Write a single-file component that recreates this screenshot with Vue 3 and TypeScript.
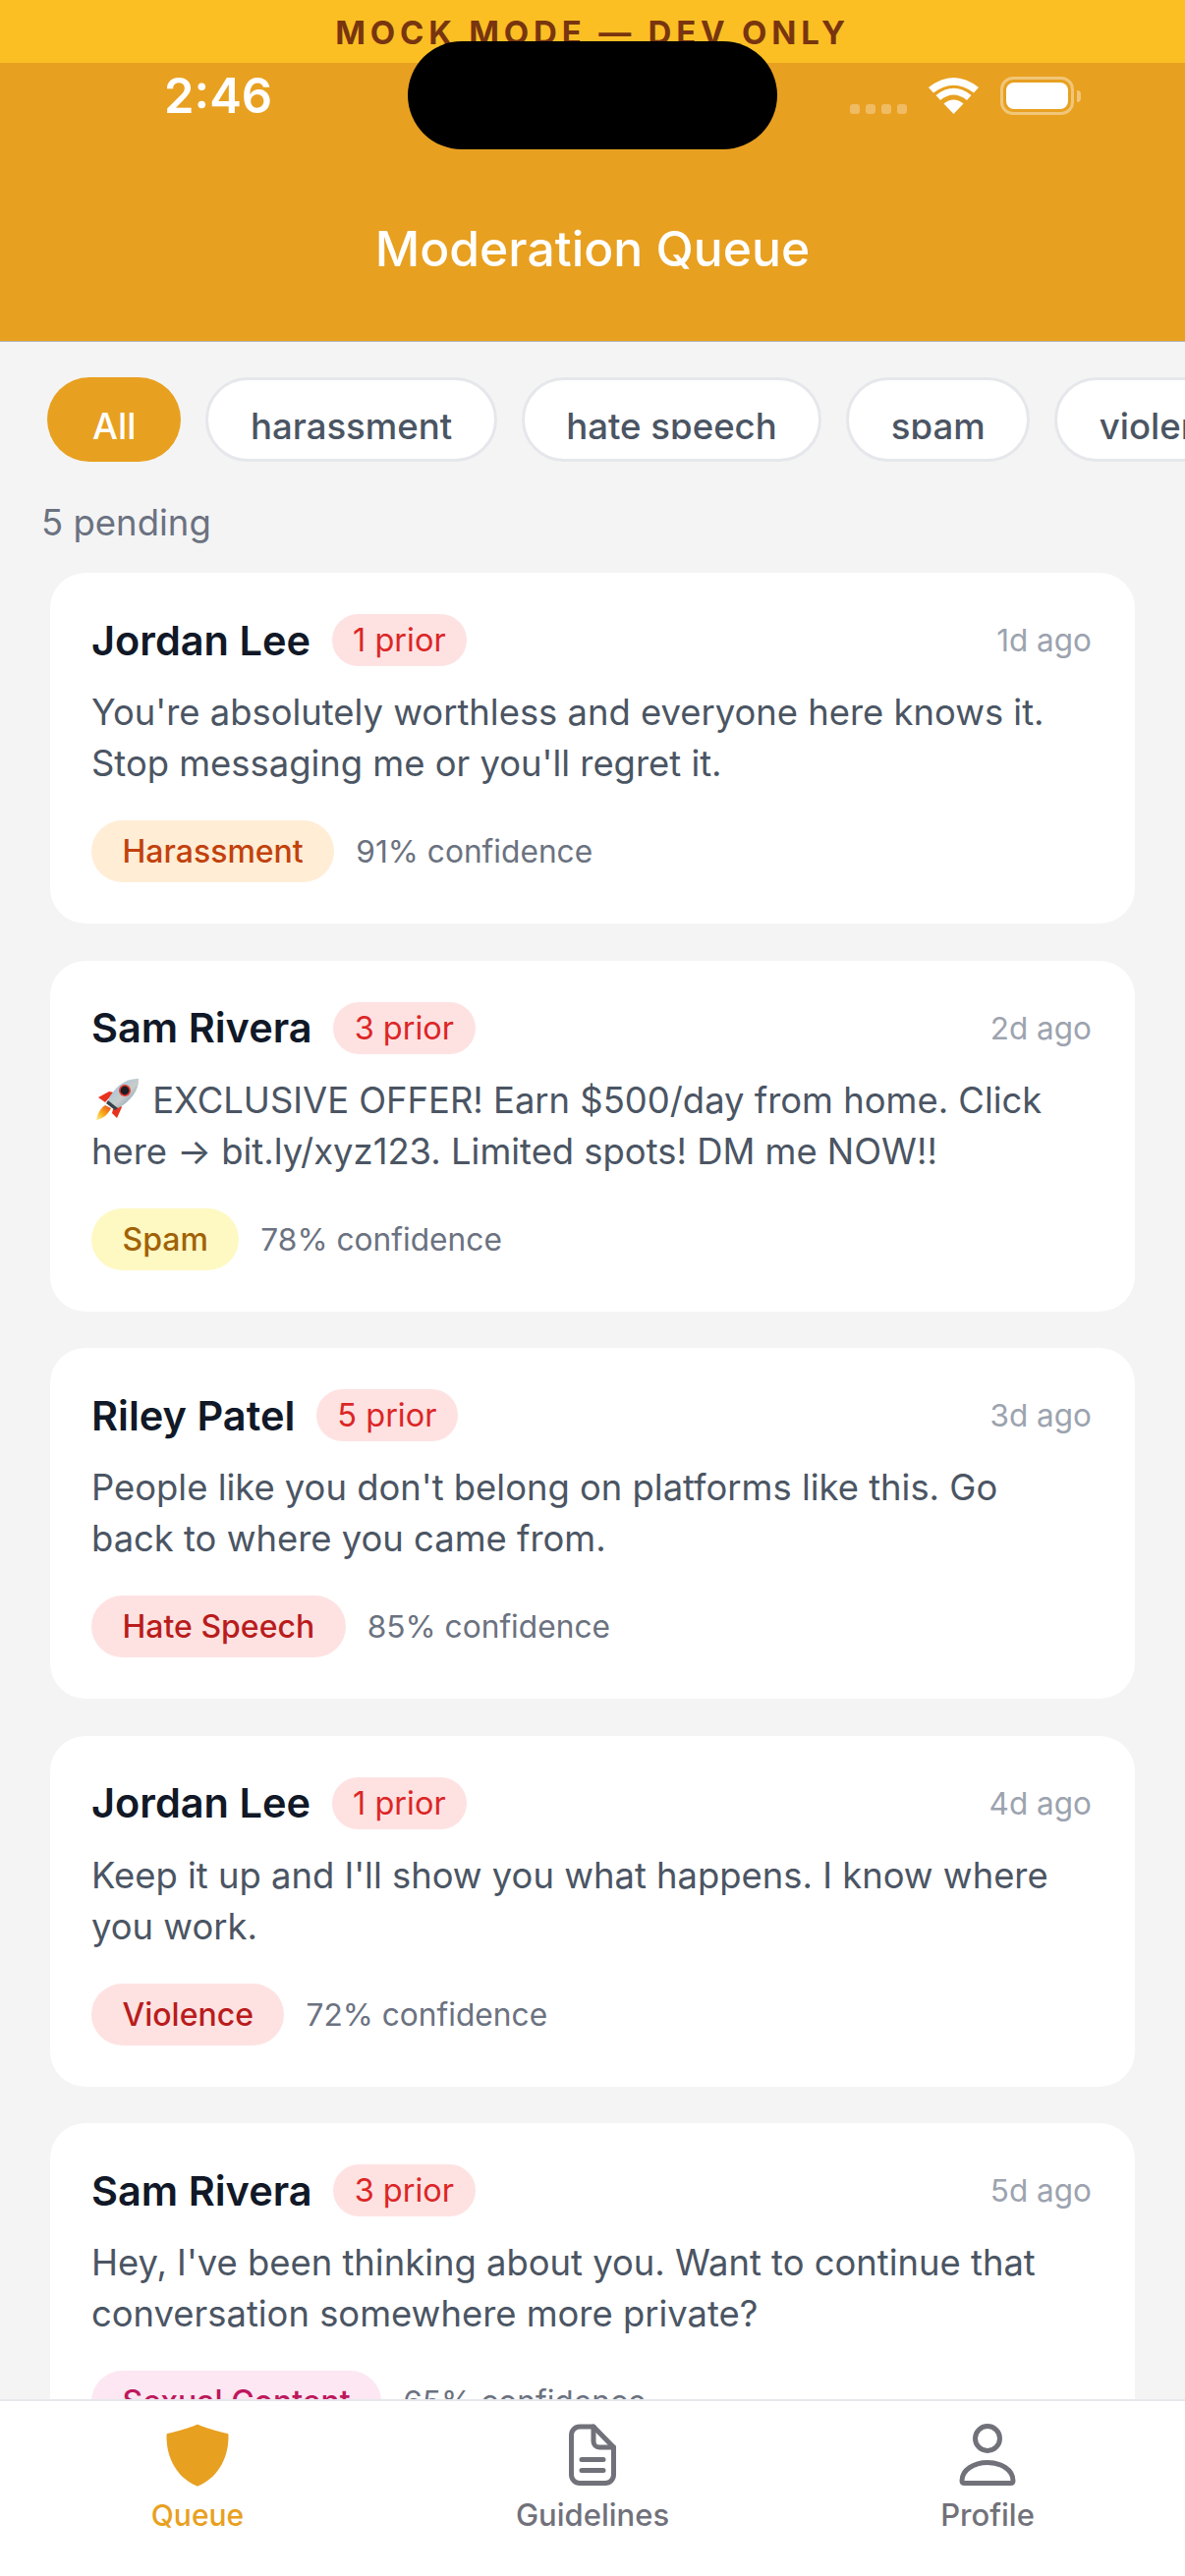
<script setup lang="ts">
interface Report {
  name: string
  prior: number
  age: string
  text: string
  rocket?: boolean
  label: string
  kind: string
  confidence: number
}

const chips = ['All', 'harassment', 'hate speech', 'spam', 'violence']

const reports: Report[] = [
  {
    name: 'Jordan Lee',
    prior: 1,
    age: '1d ago',
    text: "You're absolutely worthless and everyone here knows it. Stop messaging me or you'll regret it.",
    label: 'Harassment',
    kind: 'orange',
    confidence: 91,
  },
  {
    name: 'Sam Rivera',
    prior: 3,
    age: '2d ago',
    text: 'EXCLUSIVE OFFER! Earn $500/day from home. Click here → bit.ly/xyz123. Limited spots! DM me NOW!!',
    rocket: true,
    label: 'Spam',
    kind: 'yellow',
    confidence: 78,
  },
  {
    name: 'Riley Patel',
    prior: 5,
    age: '3d ago',
    text: "People like you don't belong on platforms like this. Go back to where you came from.",
    label: 'Hate Speech',
    kind: 'red',
    confidence: 85,
  },
  {
    name: 'Jordan Lee',
    prior: 1,
    age: '4d ago',
    text: "Keep it up and I'll show you what happens. I know where you work.",
    label: 'Violence',
    kind: 'red',
    confidence: 72,
  },
  {
    name: 'Sam Rivera',
    prior: 3,
    age: '5d ago',
    text: "Hey, I've been thinking about you. Want to continue that conversation somewhere more private?",
    label: 'Sexual Content',
    kind: 'pink',
    confidence: 65,
  },
]
</script>

<template>
  <div class="screen">
    <div class="banner">MOCK MODE — DEV ONLY</div>
    <div class="island"></div>

    <header class="header">
      <div class="status">
        <span class="time">2:46</span>
        <div class="status-icons">
          <div class="signal"><i></i><i></i><i></i><i></i></div>
          <svg class="wifi" width="51" height="37" viewBox="0 0 51 37" aria-hidden="true">
            <path d="M25.5 37 L15.5 26.5 Q25.5 18.5 35.5 26.5 Z" fill="#fff" />
            <path d="M7.5 18 Q25.5 3.5 43.5 18 L39 23 Q25.5 12 12 23 Z" fill="#fff" />
            <path d="M0 10 Q25.5 -10 51 10 L46 15.5 Q25.5 0 5 15.5 Z" fill="#fff" />
          </svg>
          <div class="battery"><div class="battery-level"></div></div>
          <div class="battery-nub"></div>
        </div>
      </div>
      <h1 class="title">Moderation Queue</h1>
    </header>

    <main class="content">
      <div class="chips">
        <button v-for="(chip, i) in chips" :key="chip" class="chip" :class="{ 'chip--active': i === 0 }">
          <span class="chip-label">{{ chip }}</span>
        </button>
      </div>
      <p class="count">5 pending</p>
      <div class="list">
        <article v-for="r in reports" :key="r.age" class="card">
          <div class="card-head">
            <span class="name">{{ r.name }}</span>
            <span class="prior">{{ r.prior }} prior</span>
            <span class="age">{{ r.age }}</span>
          </div>
          <p class="message">
            <svg v-if="r.rocket" class="rocket" width="46" height="44" viewBox="0 0 46 44" aria-hidden="true">
              <defs>
                <linearGradient id="hull" x1="0" y1="0" x2="1" y2="1">
                  <stop offset="0" stop-color="#8fc4ea" />
                  <stop offset="0.55" stop-color="#c9ccc9" />
                  <stop offset="1" stop-color="#5f8fb5" />
                </linearGradient>
                <linearGradient id="flame" x1="1" y1="0" x2="0" y2="1">
                  <stop offset="0" stop-color="#e8451c" />
                  <stop offset="0.6" stop-color="#f9b21c" />
                  <stop offset="1" stop-color="#fdf0a0" />
                </linearGradient>
              </defs>
              <path d="M4 20 L15 14 L20 15 L11 25 Z" fill="#e8321c" />
              <path d="M19 32 L26 27 L28 30 L23 41 L18 36 Z" fill="#e8321c" />
              <path d="M11 28 L17 31 C14 37 9 42 2 43 C3 37 6 31 11 28 Z" fill="url(#flame)" />
              <path d="M45 1 C46 12 37 24 24 31 L14 23 C20 9 33 0 45 1 Z" fill="url(#hull)" />
              <path d="M14 23 L24 31 L21 33 L12 26 Z" fill="#39424a" />
              <circle cx="31" cy="13" r="6" fill="#e53a2e" />
              <circle cx="31" cy="13" r="4.4" fill="#1d1d24" />
            </svg>
            {{ r.text }}
          </p>
          <div class="card-foot">
            <span class="tag" :class="`tag--${r.kind}`">{{ r.label }}</span>
            <span class="confidence">{{ r.confidence }}% confidence</span>
          </div>
        </article>
      </div>
    </main>

    <nav class="tabs">
      <div class="tab tab--active">
        <svg width="84" height="84" viewBox="0 0 84 84" aria-hidden="true">
          <path
            d="M41 11 Q42 10.5 43 11 C50 14 60 17 72.5 20 Q73.5 20.3 73.5 21.5 C74 48 60 66 43 73.3 Q42 73.7 41 73.3 C24 66 10 48 10.5 21.5 Q10.5 20.3 11.5 20 C24 17 34 14 41 11 Z"
            fill="currentColor"
          />
        </svg>
        <span>Queue</span>
      </div>
      <div class="tab">
        <svg width="84" height="84" viewBox="0 0 84 84" fill="none" stroke="currentColor" stroke-width="5" stroke-linecap="round" stroke-linejoin="round" aria-hidden="true">
          <path d="M29 13 H43 L63.5 34 V62 a8.5 8.5 0 0 1 -8.5 8.5 H29 a8.5 8.5 0 0 1 -8.5 -8.5 V21.5 a8.5 8.5 0 0 1 8.5 -8.5 Z" />
          <path d="M43 13 V28 a6 6 0 0 0 6 6 H63.5" />
          <path d="M31 46.5 H53 M31 57.5 H53" />
        </svg>
        <span>Guidelines</span>
      </div>
      <div class="tab">
        <svg width="84" height="84" viewBox="0 0 84 84" fill="none" stroke="currentColor" stroke-width="5" stroke-linejoin="round" aria-hidden="true">
          <circle cx="42" cy="25" r="12.5" />
          <path d="M16 68 C16 57 28 49.5 42 49.5 C56 49.5 68 57 68 68 Q68 70.5 65.5 70.5 H18.5 Q16 70.5 16 68 Z" />
        </svg>
        <span>Profile</span>
      </div>
    </nav>
  </div>
</template>

<style scoped>
.screen {
  position: relative;
  display: flex;
  flex-direction: column;
  width: 1206px;
  height: 2622px;
  overflow: hidden;
  background: #f4f4f5;
  font-family: Inter, 'Noto Sans', sans-serif;
}

.banner {
  flex: none;
  height: 64px;
  background: #fbbf24;
  color: #78350f;
  font-size: 33px;
  font-weight: 700;
  line-height: 66px;
  letter-spacing: 4.8px;
  text-align: center;
}

.island {
  position: absolute;
  top: 42px;
  left: 415px;
  width: 376px;
  height: 110px;
  border-radius: 55px;
  background: #000;
}

.header {
  flex: none;
  height: 284px;
  box-sizing: border-box;
  border-bottom: 1px solid #b3b3b3;
  background: #e8a020;
  color: #fff;
}

.status {
  display: flex;
  align-items: center;
  height: 39px;
  margin-top: 14px;
  padding: 0 106px 0 167px;
}

.time {
  font-size: 49px;
  font-weight: 600;
  line-height: 39px;
}

.status-icons {
  display: flex;
  align-items: center;
  margin-left: auto;
}

.signal {
  display: flex;
  gap: 6px;
  align-self: flex-end;
  margin: 0 22px 1px 0;
}

.signal i {
  width: 10px;
  height: 10px;
  border-radius: 3px;
  background: rgba(255, 255, 255, 0.3);
}

.wifi {
  margin-right: 22px;
}

.battery {
  box-sizing: border-box;
  width: 75px;
  height: 39px;
  padding: 3px;
  border: 3px solid rgba(255, 255, 255, 0.4);
  border-radius: 13px;
}

.battery-level {
  height: 100%;
  border-radius: 8px;
  background: #fff;
}

.battery-nub {
  width: 4px;
  height: 12px;
  margin-left: 3px;
  border-radius: 0 4px 4px 0;
  background: rgba(255, 255, 255, 0.4);
}

.title {
  margin: 0;
  padding-top: 106px;
  font-size: 49.8px;
  font-weight: 500;
  line-height: 60px;
  text-align: center;
}

.content {
  flex: 1;
  min-height: 0;
  overflow: hidden;
}

.chips {
  display: flex;
  gap: 25px;
  margin-top: 36px;
  padding-left: 48px;
}

.chip {
  flex: none;
  display: flex;
  align-items: flex-start;
  box-sizing: border-box;
  height: 86px;
  margin: 0;
  padding: 20px 42.5px 0;
  border: 3px solid #e5e7eb;
  border-radius: 43px;
  background: #fff;
  color: #4b5563;
  font-family: inherit;
  font-size: 36.6px;
  font-weight: 500;
}

.chip--active {
  padding: 23px 46px 0;
  border: 0;
  background: #e8a020;
  color: #fff;
}

.chip-label {
  display: block;
  height: 40px;
  overflow: hidden;
  line-height: 54px;
}

.count {
  margin: 32px 0 0 42px;
  color: #6b7280;
  font-size: 36.5px;
  line-height: 60px;
}

.list {
  display: flex;
  flex-direction: column;
  gap: 37.5px;
  margin: 21px 51px 0;
}

.card {
  flex: none;
  padding: 42px 44px 42px 42px;
  border-radius: 36px;
  background: #fff;
}

.card-head {
  display: flex;
  align-items: center;
  height: 53px;
}

.name {
  color: #111827;
  font-size: 41.5px;
  font-weight: 600;
}

.prior {
  height: 53px;
  margin-left: 21.5px;
  padding: 0 21.5px;
  border-radius: 27px;
  background: #fee2e2;
  color: #dc2626;
  font-size: 32.5px;
  line-height: 53px;
}

.age {
  margin-left: auto;
  color: #9ca3af;
  font-size: 31.5px;
}

.message {
  margin: 21px 0 0;
  padding-right: 14px;
  color: #4b5563;
  font-size: 36.4px;
  line-height: 52px;
}

.rocket {
  vertical-align: -8px;
  margin: 0 3px 0 3px;
}

.card-foot {
  display: flex;
  align-items: center;
  gap: 22px;
  margin-top: 32px;
}

.tag {
  height: 63px;
  padding: 0 31.5px;
  border-radius: 32px;
  font-size: 32px;
  font-weight: 500;
  line-height: 63px;
}

.tag--orange { background: #ffedd5; color: #c2410c; }
.tag--yellow { background: #fef9c3; color: #a16207; }
.tag--red { background: #fee2e2; color: #b91c1c; }
.tag--pink { background: #fce7f3; color: #be185d; }

.confidence {
  color: #6b7280;
  font-size: 31.7px;
}

.tabs {
  position: relative;
  flex: none;
  display: grid;
  grid-template-columns: repeat(3, 1fr);
  height: 180px;
  box-sizing: border-box;
  border-top: 2px solid #e5e7eb;
  background: #fff;
}

.tab {
  display: flex;
  flex-direction: column;
  align-items: center;
  height: 150px;
  padding-top: 13px;
  color: #71717a;
  font-size: 31px;
  font-weight: 500;
}

.tab--active {
  color: #e8a020;
  font-size: 30px;
}

.tab span {
  margin-top: -1px;
  line-height: 40px;
}
</style>
